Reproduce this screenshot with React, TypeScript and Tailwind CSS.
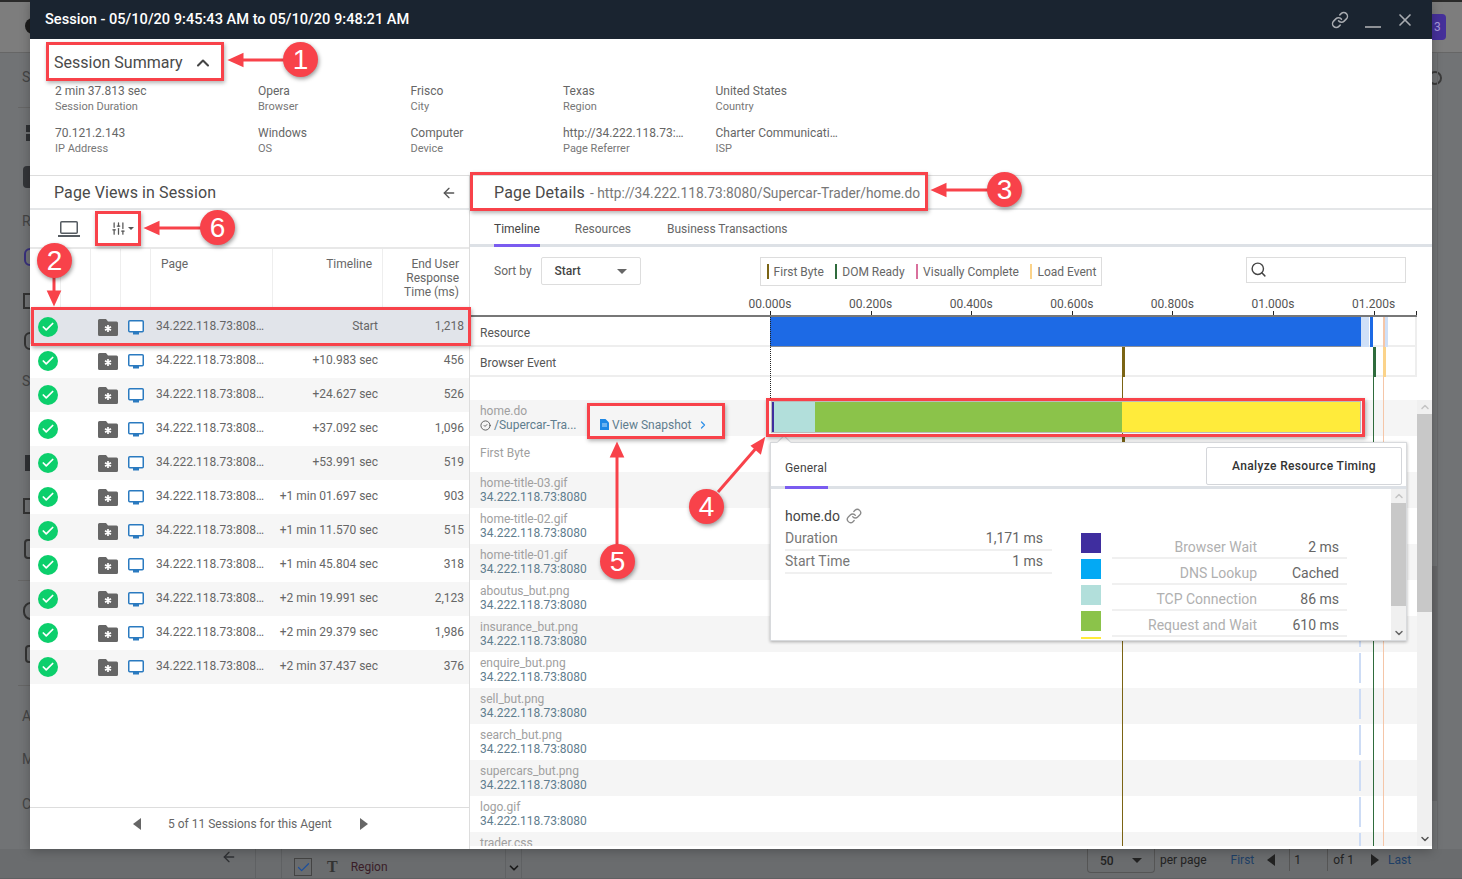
import React from 'react';
import { ArrowLeft, Check, ChevronDown, ChevronRight, ChevronUp, CircleCheck, Link, Search, SlidersVertical, X } from 'lucide-react';

const summary = [
  ['2 min 37.813 sec', 'Session Duration'],
  ['Opera', 'Browser'],
  ['Frisco', 'City'],
  ['Texas', 'Region'],
  ['United States', 'Country'],
  ['70.121.2.143', 'IP Address'],
  ['Windows', 'OS'],
  ['Computer', 'Device'],
  ['http://34.222.118.73:…', 'Page Referrer'],
  ['Charter Communicati…', 'ISP'],
];

const pageViews = [
  ['Start', '1,218'],
  ['+10.983 sec', '456'],
  ['+24.627 sec', '526'],
  ['+37.092 sec', '1,096'],
  ['+53.991 sec', '519'],
  ['+1 min 01.697 sec', '903'],
  ['+1 min 11.570 sec', '515'],
  ['+1 min 45.804 sec', '318'],
  ['+2 min 19.991 sec', '2,123'],
  ['+2 min 29.379 sec', '1,986'],
  ['+2 min 37.437 sec', '376'],
];

const resources = [
  'home-title-03.gif',
  'home-title-02.gif',
  'home-title-01.gif',
  'aboutus_but.png',
  'insurance_but.png',
  'enquire_but.png',
  'sell_but.png',
  'search_but.png',
  'supercars_but.png',
  'logo.gif',
  'trader.css',
];

const ticks = ['00.000s', '00.200s', '00.400s', '00.600s', '00.800s', '01.000s', '01.200s'];

const legend = [
  ['First Byte', 'bg-[#7b6414]'],
  ['DOM Ready', 'bg-[#2f6b3c]'],
  ['Visually Complete', 'bg-[#d9709c]'],
  ['Load Event', 'bg-[#fbd38a]'],
];

const timing = [
  ['Browser Wait', '2 ms', 'bg-[#3f2e9f]'],
  ['DNS Lookup', 'Cached', 'bg-[#03a9f4]'],
  ['TCP Connection', '86 ms', 'bg-[#b2dfdb]'],
  ['Request and Wait', '610 ms', 'bg-[#8bc34a]'],
];

const FolderIcon = () => (
  <svg width="20" height="17" viewBox="0 0 20 17">
    <path d="M1.5 0H8l2 2.5h8.5A1.5 1.5 0 0 1 20 4v11.5a1.5 1.5 0 0 1-1.5 1.5h-17A1.5 1.5 0 0 1 0 15.5v-14A1.5 1.5 0 0 1 1.5 0z" fill="#666666" />
    <path d="M10 6v7M7 7.7l6 3.6M13 7.7l-6 3.6" stroke="#fff" strokeWidth="1.7" />
  </svg>
);

const MonitorIcon = () => (
  <svg width="16" height="15" viewBox="0 0 16 15">
    <rect x="0.75" y="0.75" width="14.5" height="11" rx="1" fill="#fff" stroke="#2a7ac0" strokeWidth="1.5" />
    <rect x="5" y="12" width="6" height="2.5" fill="#2a7ac0" />
  </svg>
);

const LaptopIcon = () => (
  <svg width="22" height="16" viewBox="0 0 22 16">
    <rect x="2.75" y="0.75" width="16.5" height="11.5" rx="1" fill="none" stroke="#555b61" strokeWidth="1.5" />
    <rect x="0" y="14" width="22" height="2" fill="#555b61" />
  </svg>
);

const DocIcon = () => (
  <svg width="9" height="11" viewBox="0 0 9 11">
    <path d="M0 0h5.5L9 3.5V11H0z" fill="#1e88e5" />
    <path d="M2 5h5M2 7h5" stroke="#bbdefb" strokeWidth="1" />
  </svg>
);

const Caret = ({ dir }: { dir: 'left' | 'right' }) => (
  <svg width="8" height="12" viewBox="0 0 8 12">
    <path d={dir === 'left' ? 'M8 0v12L0 6z' : 'M0 0v12l8-6z'} fill="currentColor" />
  </svg>
);

const Sidebar = () => (
  <div className="w-[30px] overflow-hidden shrink-0 text-[#444] text-[14px] leading-[16px] pl-[22px] pt-[16px]">
    <div>S</div>
    <div className="mt-[22px] -ml-[4px] w-[20px] h-px bg-[#666]" />
    <div className="mt-[17px] ml-[4px] w-[6px] h-[16px] flex flex-col justify-between">
      <div className="w-[6px] h-[7px] bg-[#2f3134]" />
      <div className="w-[6px] h-[7px] bg-[#2f3134]" />
    </div>
    <div className="mt-[25px] ml-[1px] w-[14px] h-[22px] rounded bg-[#333538]" />
    <div className="mt-[25px] whitespace-nowrap">RE</div>
    <div className="mt-[19px] ml-[2px] w-[12px] h-[18px] rounded-full border-2 border-[#38307d]" />
    <div className="mt-[27px] ml-[1px] w-[12px] h-[16px] border-2 border-[#333]" />
    <div className="mt-[23px] ml-[2px] w-[12px] h-[18px] rounded-full border-2 border-[#333]" />
    <div className="mt-[23px] whitespace-nowrap">SY</div>
    <div className="mt-[66px] ml-[3px] w-[8px] h-[16px] bg-[#2f3134]" />
    <div className="mt-[27px] ml-[1px] w-[12px] h-[16px] border-2 border-[#333]" />
    <div className="mt-[25px] ml-[2px] w-[12px] h-[20px] rounded-sm border-2 border-[#333]" />
    <div className="mt-[21px] -ml-[4px] w-[20px] h-px bg-[#666]" />
    <div className="mt-[21px] ml-[1px] w-[16px] h-[18px] rounded-full border-2 border-[#333]" />
    <div className="mt-[25px] ml-[3px] w-[14px] h-[18px] rounded-sm border-2 border-[#333]" />
    <div className="mt-[22px] -ml-[4px] w-[20px] h-px bg-[#666]" />
    <div className="mt-[22px]">A</div>
    <div className="mt-[27px]">M</div>
    <div className="mt-[29px]">C</div>
  </div>
);

const RightStrip = () => (
  <div className="ml-auto w-[30px] shrink-0 flex">
    <div className="w-[5px] overflow-visible">
      <div className="mt-[18px] -ml-[4px] w-[14px] h-[14px] rounded-full border-2 border-[#3a3a3a]" />
      <div className="mt-[481px] h-[235px] bg-[#666769]" />
    </div>
    <div className="flex-1 border-l border-[#68696b]" />
  </div>
);

const BottomStrip = () => (
  <div className="h-[30px] shrink-0 flex text-[12px] text-[#222] bg-[#6a6c6e] border-b border-[#5f6163]">
    <div className="w-[221px] shrink-0" />
    <ArrowLeft size={16} className="text-[#2f3134] shrink-0" />
    <div className="w-[18px] shrink-0" />
    <div className="w-[27px] h-full shrink-0 border-x border-[#5f6163]" />
    <div className="w-[240px] h-full shrink-0 flex border-r border-[#5f6163]">
      <div className="flex-1 pl-[12px] pt-[9px] flex items-start">
        <div className="w-[18px] h-[18px] shrink-0 border border-[#444] flex items-center justify-center">
          <Check size={15} className="text-[#1d4f9c]" />
        </div>
        <span className="ml-[15px] text-[16px] leading-[18px] text-[#333] font-['Liberation_Serif',serif] font-bold">T</span>
        <span className="ml-[13px] leading-[18px] text-[#3a1d28]">Region</span>
      </div>
      <div className="w-[16px] border-l border-[#5f6163] pt-[12px] flex justify-center">
        <ChevronDown size={14} strokeWidth={3} className="text-[#1a1a1a]" />
      </div>
    </div>
    <div className="w-[565px] shrink-0" />
    <div className="w-[68px] h-[24px] shrink-0 border-x border-b border-[#555] rounded-b flex items-center justify-between px-[12px] font-medium">
      50
      <span className="w-0 h-0 border-x-[5px] border-x-transparent border-t-[5px] border-t-[#222]" />
    </div>
    <div className="h-[22px] flex items-center">
      <span className="ml-[5px]">per page</span>
      <span className="ml-[24px] text-[#1e3f66]">First</span>
      <span className="ml-[13px]">
        <Caret dir="left" />
      </span>
      <div className="ml-[14px] w-[39px] h-[22px] border-x border-[#555] pl-[4px] flex items-center">1</div>
      <span className="ml-[5px]">of 1</span>
      <span className="ml-[17px]">
        <Caret dir="right" />
      </span>
      <span className="ml-[9px] text-[#1e3f66]">Last</span>
    </div>
  </div>
);

const SummaryPanel = () => (
  <div className="h-[137px] border-b border-[#ddd] shrink-0">
    <div className="h-[39px] mt-[4px] pl-[24px] pt-[1px] flex items-center text-[16px] text-[#4a4a4a]">
      Session Summary
      <ChevronUp size={20} strokeWidth={2.5} className="ml-[10px] text-[#444]" />
    </div>
    <div className="mt-[1px] pl-[25px] grid grid-cols-[203px_152.5px_152.5px_152.5px_152.5px] gap-y-[11px]">
      {summary.map(([value, label]) => (
        <div key={label}>
          <div className="text-[12px] leading-[16px] text-[#666]">{value}</div>
          <div className="text-[11px] leading-[15px] text-[#777]">{label}</div>
        </div>
      ))}
    </div>
  </div>
);

const PageViews = () => (
  <div className="w-[440px] shrink-0 border-r border-[#ddd] flex flex-col">
    <div className="h-[34px] shrink-0 border-b-2 border-[#e4e6e8] pl-[24px] pr-[12px] pt-[1px] flex items-center justify-between text-[16px] text-[#4a4a4a] tracking-[0.1px]">
      Page Views in Session
      <ArrowLeft size={16} className="text-[#555]" />
    </div>
    <div className="h-[37px] shrink-0 pl-[28px] flex items-center">
      <LaptopIcon />
      <div className="ml-[31px] flex items-center gap-[2px] text-[#555]">
        <SlidersVertical size={15} strokeWidth={2} />
        <span className="w-0 h-0 border-x-[3px] border-x-transparent border-t-[3px] border-t-[#555]" />
      </div>
    </div>
    <div className="h-[63px] shrink-0 border-y-2 border-[#e8e8e8] grid grid-cols-[31px_30px_30px_30px_122px_110px_1fr] text-[12px] leading-[14px] text-[#666]">
      <div className="border-r border-[#eee]" />
      <div className="border-r border-[#eee]" />
      <div className="border-r border-[#eee]" />
      <div className="border-r border-[#eee]" />
      <div className="border-r border-[#eee] pl-[10px] pt-[8px]">Page</div>
      <div className="border-r border-[#eee] pr-[10px] pt-[8px] text-right">Timeline</div>
      <div className="pr-[10px] pt-[8px] text-right">
        End User
        <br />
        Response
        <br />
        Time (ms)
      </div>
    </div>
    <div>
      {pageViews.map(([timeline, ms], i) => (
        <div
          key={timeline}
          className={`h-[34px] grid grid-cols-[60px_30px_30px_122px_110px_1fr] items-center text-[12px] text-[#666] ${
            i === 0 ? 'bg-[#e1e4ea]' : i % 2 === 0 ? 'bg-[#f6f6f6]' : 'bg-white'
          }`}
        >
          <div className="pl-[8px]">
            <div className="w-[20px] h-[20px] rounded-full bg-[#0ccf6c] flex items-center justify-center">
              <Check size={14} strokeWidth={3} className="text-white" />
            </div>
          </div>
          <div className="pl-[8px] pt-[1px]">
            <FolderIcon />
          </div>
          <div className="pl-[8px] pt-[1px]">
            <MonitorIcon />
          </div>
          <div className="pl-[6px] pb-[2px] whitespace-nowrap">34.222.118.73:808…</div>
          <div className="pr-[4px] pb-[2px] text-right whitespace-nowrap">{timeline}</div>
          <div className="pr-[5px] pb-[2px] text-right">{ms}</div>
        </div>
      ))}
    </div>
    <div className="mt-auto h-[42px] shrink-0 border-t border-[#ddd] pl-[103px] pb-[10px] flex items-center text-[12px] text-[#666]">
      <Caret dir="left" />
      <span className="ml-[27px]">5 of 11 Sessions for this Agent</span>
      <span className="ml-[28px]">
        <Caret dir="right" />
      </span>
    </div>
  </div>
);

const ResourceRow = ({ name, index }: { name: string; index: number }) => (
  <div className={`relative h-[36px] pl-[10px] flex flex-col justify-center text-[12px] leading-[14px] shrink-0 ${index % 2 === 0 ? 'bg-[#f5f5f5]' : 'bg-white'}`}>
    <div className="text-[#a0a0a0]">{name}</div>
    <div className="text-[#5f7d8e]">34.222.118.73:8080</div>
    <div className="absolute left-[889px] top-[1px] w-[2px] h-[30px] bg-[#cddcf5]" />
  </div>
);

const Popover = () => (
  <div className="absolute left-[300px] top-[125px] w-[637px] h-[199px] z-20 bg-white border border-[#d8dadd] shadow-[0_1px_3px_rgba(0,0,0,0.3)] flex flex-col">
    <div className="absolute left-[8px] -top-[6px] w-[10px] h-[10px] rotate-45 bg-white border-l border-t border-[#d8dadd]" />
    <div className="relative h-[46px] shrink-0 border-b-[3px] border-[#dde1e6] pl-[14px] pr-[4px] flex justify-between">
      <div className="w-[43px] h-[46px] pt-[18px] border-b-[3px] border-[#7a5cf0] text-[12px] leading-[14px] text-[#444] tracking-[0.2px]">General</div>
      <div className="w-[196px] h-[38px] mt-[4px] border border-[#d4d6da] rounded-[2px] flex items-center justify-center text-[12px] font-medium text-[#333] bg-white tracking-[0.35px]">
        Analyze Resource Timing
      </div>
    </div>
    <div className="flex-1 flex overflow-hidden">
      <div className="w-[296px] shrink-0 pl-[14px] pr-[15px]">
        <div className="mt-[17px] h-[20px] flex items-center gap-[6px] text-[14px] text-[#444]">
          home.do
          <Link size={16} className="text-[#8a8a8a]" />
        </div>
        <div className="mt-[2px] h-[23px] pr-[9px] flex items-center justify-between border-b-2 border-[#f0f0f0] text-[14px] text-[#777]">
          Duration
          <span className="text-[#666]">1,171 ms</span>
        </div>
        <div className="h-[23px] pr-[9px] flex items-center justify-between border-b-2 border-[#f0f0f0] text-[14px] text-[#777]">
          Start Time
          <span className="text-[#666]">1 ms</span>
        </div>
      </div>
      <div className="pl-[14px] pt-[44px] flex flex-col gap-[6px]">
        {timing.map(([label, value, color]) => (
          <div key={label} className="h-[20px] flex items-start">
            <div className={`w-[20px] h-[20px] shrink-0 ${color}`} />
            <div className="ml-[11px] w-[235px] h-[26px] pt-[4px] pr-[8px] flex items-center border-b-2 border-[#f0f0f0] text-[14px]">
              <span className="flex-1 text-right text-[#b0b0b0]">{label}</span>
              <span className="w-[82px] text-right text-[#666]">{value}</span>
            </div>
          </div>
        ))}
        <div className="w-[20px] h-[2px] bg-[#ffeb3b]" />
      </div>
      <div className="ml-auto w-[15px] shrink-0 bg-[#f0f0f0] flex flex-col items-center">
        <ChevronUp size={12} strokeWidth={3} className="text-[#c4c4c4] mt-[1px]" />
        <div className="w-full h-[103px] mt-[1px] bg-[#c8c8c8]" />
        <ChevronDown size={12} strokeWidth={3} className="text-[#666] mt-auto mb-[1px]" />
      </div>
    </div>
  </div>
);

const Timeline = () => (
  <div className="flex-1 relative overflow-hidden">
    {/* vertical markers run through every row */}
    <div className="absolute left-[300px] top-0 h-[83px] border-l border-dotted border-[#222] z-10" />
    <div className="absolute left-[652px] top-[60px] bottom-0 w-px bg-[#7b6414] z-10" />
    <div className="absolute left-[903px] top-[60px] bottom-0 w-px bg-[#2f6b3c] z-10" />
    <div className="absolute left-[913px] top-[60px] bottom-0 w-px bg-[#f5c6a8] z-10" />

    <div className="h-[30px] border-b-2 border-[#eee] flex items-stretch w-[947px] text-[12px] text-[#555]">
      <div className="w-[300px] pl-[10px] pt-[4px] flex items-center shrink-0">Resource</div>
      <div className="relative flex-1 border-r-2 border-[#eee]">
        <div className="absolute left-0 top-0 h-[30px] w-[591px] bg-[#1d6ae5] border-b border-[#8a8f98]" />
        <div className="absolute left-[591px] top-0 h-[30px] w-[8px] bg-[#cfe0f8]" />
        <div className="absolute left-[600px] top-0 h-[30px] w-[3px] bg-[#1d6ae5]" />
        <div className="absolute left-[613px] top-0 h-[30px] w-[2px] bg-[#f5c6a8]" />
        <div className="absolute left-[615px] top-0 h-[30px] w-[3px] bg-[#cfe0f8]" />
      </div>
    </div>
    <div className="h-[30px] border-b-2 border-[#eee] flex items-stretch w-[947px] text-[12px] text-[#555]">
      <div className="w-[300px] pl-[10px] pt-[4px] flex items-center shrink-0">Browser Event</div>
      <div className="relative flex-1 border-r-2 border-[#eee]">
        <div className="absolute left-[352px] top-0 h-[30px] w-[3px] bg-[#7b6414]" />
        <div className="absolute left-[603px] top-0 h-[30px] w-[3px] bg-[#2f6b3c]" />
        <div className="absolute left-[613px] top-0 h-[30px] w-[3px] bg-[#fbd38a]" />
      </div>
    </div>
    <div className="h-[23px]" />

    <div className="flex">
      <div className="w-[947px] shrink-0">
        <div className="relative h-[36px] bg-[#f5f5f5] flex text-[12px] leading-[14px]">
          <div className="w-[118px] pl-[10px] shrink-0 flex flex-col justify-center">
            <div className="text-[#a0a0a0]">home.do</div>
            <div className="flex items-center gap-[3px] text-[#5f7d8e] whitespace-nowrap">
              <CircleCheck size={11} className="text-[#555] shrink-0" />
              /Supercar-Tra...
            </div>
          </div>
          <div className="w-[130px] pl-[12px] pt-[19px] shrink-0 flex items-start gap-[3px] text-[#5f7d8e]">
            <DocIcon />
            <span className="whitespace-nowrap -mt-[1px]">View Snapshot</span>
            <ChevronRight size={12} strokeWidth={2.5} className="text-[#2f8fe8] ml-[2px]" />
          </div>
          <div className="absolute left-[301px] top-[1px] w-[590px] h-[32px] flex z-10 border border-[#bbb]">
            <div className="w-[2px] bg-[#3f2e9f]" />
            <div className="w-[41px] bg-[#b2dfdb]" />
            <div className="w-[307px] bg-[#8bc34a]" />
            <div className="flex-1 bg-[#ffeb3b]" />
          </div>
        </div>
        <div className="relative h-[36px] pl-[10px] pb-[2px] flex items-center text-[12px] text-[#a0a0a0] bg-white">
          First Byte
          <div className="absolute left-[652px] top-0 w-[3px] h-[6px] bg-[#7b6414] z-10" />
        </div>
        {resources.map((name, i) => (
          <ResourceRow key={name} name={name} index={i} />
        ))}
      </div>
      <div className="w-[15px] h-[446px] shrink-0 bg-[#f0f0f0] flex flex-col items-center z-10">
        <ChevronUp size={12} strokeWidth={3} className="text-[#c4c4c4] mt-[1px]" />
        <div className="w-full h-[198px] mt-[1px] bg-[#c8c8c8]" />
        <ChevronDown size={12} strokeWidth={3} className="text-[#555] mt-auto mb-[1px]" />
      </div>
    </div>
    <Popover />
  </div>
);

const PageDetails = () => (
  <div className="flex-1 flex flex-col min-w-0">
    <div className="h-[34px] shrink-0 border-b-2 border-[#e4e6e8] pl-[24px] pt-[2px] flex items-center text-[#4a4a4a]">
      <span className="text-[16px] tracking-[0.15px]">Page Details</span>
      <span className="ml-[5px] text-[13.75px] text-[#777]">- http://34.222.118.73:8080/Supercar-Trader/home.do</span>
    </div>
    <div className="h-[37px] shrink-0 border-b-[3px] border-[#dde1e6] pl-[24px] flex text-[12px] text-[#666]">
      <div className="h-[37px] pt-[10px] border-b-[3px] border-[#7a5cf0] text-[#444]">Timeline</div>
      <div className="pt-[10px] ml-[35px]">Resources</div>
      <div className="pt-[10px] ml-[36px]">Business Transactions</div>
    </div>
    <div className="h-[49px] shrink-0 pt-[10px] pl-[24px] flex items-start text-[12px] text-[#666]">
      <span className="h-[28px] flex items-center">Sort by</span>
      <div className="ml-[9px] w-[100px] h-[28px] border border-[#ddd] rounded-[2px] px-[13px] flex items-center justify-between font-medium text-[#444]">
        Start
        <span className="w-0 h-0 border-x-[5px] border-x-transparent border-t-[5px] border-t-[#666]" />
      </div>
      <div className="ml-[119px] w-[342px] h-[29px] border border-[#ddd] pl-[6px] flex items-center">
        {legend.map(([label, color]) => (
          <div key={label} className="flex items-center h-[15px] mr-[11.5px] whitespace-nowrap">
            <span className={`w-[2px] h-[15px] mr-[5px] ${color}`} />
            {label}
          </div>
        ))}
      </div>
      <div className="ml-[144px] w-[160px] h-[26px] border border-[#ddd] pl-[3px] pb-[2px] flex items-center">
        <Search size={17} strokeWidth={2} className="text-[#444]" />
      </div>
    </div>
    <div className="relative h-[21px] shrink-0 w-[947px] border-b-2 border-[#777] text-[12px] text-[#555]">
      {ticks.map((t, i) => (
        <React.Fragment key={t}>
          <span className="absolute top-0 -translate-x-1/2 leading-[16px]" style={{ left: 300 + i * 100.6 }}>
            {t}
          </span>
          <span className="absolute bottom-0 w-px h-[4px] bg-[#222]" style={{ left: 300 + i * 100.6 }} />
        </React.Fragment>
      ))}
      <span className="absolute bottom-0 right-0 w-px h-[4px] bg-[#222]" />
    </div>
    <Timeline />
    <div className="h-[3px] shrink-0" />
  </div>
);

const Annotation = ({ className }: { className: string }) => (
  <div className={`absolute border-[3px] border-[#f8424a] shadow-[1px_2px_4px_rgba(0,0,0,0.3)] z-30 ${className}`} />
);

const Badge = ({ n, className }: { n: number; className: string }) => (
  <div
    className={`absolute z-40 w-[35px] h-[35px] rounded-full bg-[#f8424a] text-white text-[28px] font-['Liberation_Sans',sans-serif] flex items-center justify-center shadow-[1px_2px_4px_rgba(0,0,0,0.4)] ${className}`}
  >
    {n}
  </div>
);

const Annotations = () => (
  <>
    <Annotation className="left-[46px] top-[42px] w-[178px] h-[39px]" />
    <Annotation className="left-[95px] top-[211px] w-[46px] h-[35px]" />
    <Annotation className="left-[31px] top-[307px] w-[440px] h-[39px]" />
    <Annotation className="left-[470px] top-[172px] w-[458px] h-[39px]" />
    <Annotation className="left-[587px] top-[403px] w-[138px] h-[36px]" />
    <Annotation className="left-[766px] top-[398px] w-[599px] h-[39px]" />
    <svg className="absolute left-0 top-0 z-30 pointer-events-none" width="1462" height="879" viewBox="0 0 1462 879">
      <g fill="#f8424a" stroke="#f8424a" strokeWidth="3">
        <path d="M285 60H238" fill="none" />
        <path d="M231 60l11-5v10z" />
        <path d="M202 228H154" fill="none" />
        <path d="M147 228l11-5v10z" />
        <path d="M988 190H941" fill="none" />
        <path d="M934 190l11-5v10z" />
        <path d="M54 277V296" fill="none" />
        <path d="M54 303l-5-11h10z" />
        <path d="M617 545V452" fill="none" />
        <path d="M617 445l-5 11h10z" />
        <path d="M718 492L758 446" fill="none" />
        <path d="M763 440l-3 12-7-6z" />
      </g>
    </svg>
    <Badge n={1} className="left-[283px] top-[42px]" />
    <Badge n={2} className="left-[37px] top-[243px]" />
    <Badge n={3} className="left-[987px] top-[172px]" />
    <Badge n={4} className="left-[689px] top-[489px]" />
    <Badge n={5} className="left-[600px] top-[544px]" />
    <Badge n={6} className="left-[200px] top-[210px]" />
  </>
);

export default function App() {
  return (
    <div className="relative w-[1462px] h-[879px] overflow-hidden bg-[#717375] font-['Roboto',sans-serif] flex flex-col">
      {/* dimmed page behind the dialog */}
      <div className="h-[53px] shrink-0 border-t-2 border-b border-t-[#2a2a2a] border-b-[#666] bg-[#7d7d7d] pl-[25px] pr-[16px] flex justify-between items-center">
        <div className="w-[8px] h-[16px] -mt-[2px] rounded-l-full bg-[#1c1c1c]" />
        <div className="w-[14px] h-[26px] -mt-[1px] pl-[2px] rounded-r-sm bg-[#45309a] text-[#a79ad8] text-[12px] flex items-center">3</div>
      </div>
      <div className="flex-1 flex min-h-0">
        <Sidebar />
        <RightStrip />
      </div>
      <BottomStrip />

      <div className="absolute left-[30px] top-0 w-[1402px] h-[849px] bg-white flex flex-col shadow-[0_2px_10px_rgba(0,0,0,0.25)]">
        <div className="h-[39px] shrink-0 bg-[#1a2430] pl-[15px] pr-[17px] flex items-center text-[14.6px] font-medium text-white">
          Session - 05/10/20 9:45:43 AM to 05/10/20 9:48:21 AM
          <Link size={18} className="ml-auto text-[#a8abb0]" />
          <div className="ml-[16px] mt-[14px] w-[16px] h-[2px] bg-[#8e9196]" />
          <X size={20} className="ml-[14px] text-[#a8abb0]" />
        </div>
        <SummaryPanel />
        <div className="flex-1 flex min-h-0">
          <PageViews />
          <PageDetails />
        </div>
      </div>

      <Annotations />
    </div>
  );
}
